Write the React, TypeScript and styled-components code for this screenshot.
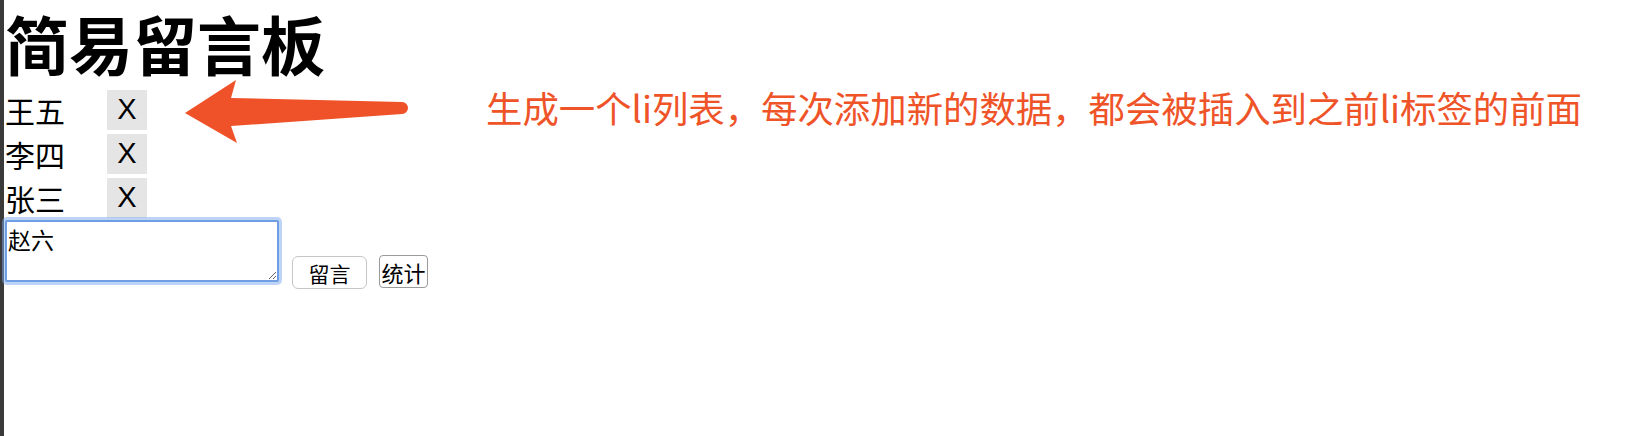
import React from "react";
import styled, { createGlobalStyle } from "styled-components";

const GlobalStyle = createGlobalStyle`
  html, body {
    margin: 0;
    padding: 0;
    background: #ffffff;
  }
  body {
    font-family: "Noto Sans CJK SC", "Liberation Sans", sans-serif;
    color: #000000;
  }
`;

const messages = ["王五", "李四", "张三"];

function App() {
  return (
    <>
      <GlobalStyle />
      <Page>
        <EdgeStrip />
        <Main>
          <Title>简易留言板</Title>
          <MessageList>
            {messages.map((name) => (
              <MessageRow key={name}>
                <Name>{name}</Name>
                <DeleteButton>X</DeleteButton>
              </MessageRow>
            ))}
          </MessageList>
          <Composer>
            <MessageInput defaultValue="赵六" />
            <SubmitButton>留言</SubmitButton>
            <CountButton>统计</CountButton>
          </Composer>

          <Arrow viewBox="0 0 235 75" width="235" height="75">
            <path
              d="M6 38 L57 5 L52 23 L223 27 A6 6 0 0 1 223 39 L52 51 L58 68 Z"
              fill="#ef5128"
            />
          </Arrow>
          <Note>生成一个li列表，每次添加新的数据，都会被插入到之前li标签的前面</Note>
        </Main>
      </Page>
    </>
  );
}

export default App;

const Page = styled.div`
  display: flex;
  min-height: 100vh;
`;

const EdgeStrip = styled.div`
  width: 4px;
  flex: none;
  background: #3a3a3a;
`;

const Main = styled.div`
  position: relative;
  flex: 1;
  padding-left: 1px;
`;

const Title = styled.h1`
  margin: -4px 0 0;
  font-size: 64px;
  line-height: normal;
  font-weight: bold;
`;

const MessageList = styled.ul`
  list-style: none;
  margin: 1.5px 0 0;
  padding: 0;
  display: flex;
  flex-direction: column;
  gap: 4px;
`;

const MessageRow = styled.li`
  display: flex;
  align-items: center;
  height: 40px;
`;

const Name = styled.span`
  font-size: 30px;
  line-height: 40px;
  width: 102px;
`;

const DeleteButton = styled.button`
  width: 40px;
  height: 40px;
  padding: 0;
  border: none;
  background: #e5e5e5;
  font-family: "Liberation Sans", Arial, sans-serif;
  font-size: 29px;
  color: #000000;
`;

const Composer = styled.div`
  margin-top: 2px;
`;

const MessageInput = styled.textarea`
  box-sizing: border-box;
  width: 274px;
  height: 62px;
  padding: 0 1px;
  border: 2px solid #6f9ee3;
  border-radius: 2px;
  box-shadow: 0 0 0 3px rgba(125, 170, 238, 0.5);
  outline: none;
  font-family: "Noto Sans CJK SC", sans-serif;
  font-size: 23px;
  color: #000000;
  vertical-align: baseline;
`;

const SubmitButton = styled.button`
  box-sizing: border-box;
  margin-left: 13px;
  width: 75px;
  height: 33px;
  padding: 0;
  border: 1px solid #c6c6c6;
  border-radius: 6px;
  background: #ffffff;
  font-family: "Noto Sans CJK SC", sans-serif;
  font-size: 21px;
  color: #000000;
`;

const CountButton = styled.button`
  box-sizing: border-box;
  margin-left: 12px;
  width: 49px;
  height: 33px;
  padding: 0;
  border: 1px solid #9a9a9a;
  border-radius: 4px;
  background: #ffffff;
  font-family: "Noto Sans CJK SC", sans-serif;
  font-size: 22px;
  color: #000000;
`;

const Arrow = styled.svg`
  position: absolute;
  left: 175px;
  top: 75px;
`;

const Note = styled.div`
  position: absolute;
  left: 482px;
  top: 89px;
  font-size: 36.4px;
  line-height: 1;
  color: #ef5429;
  white-space: nowrap;
`;
